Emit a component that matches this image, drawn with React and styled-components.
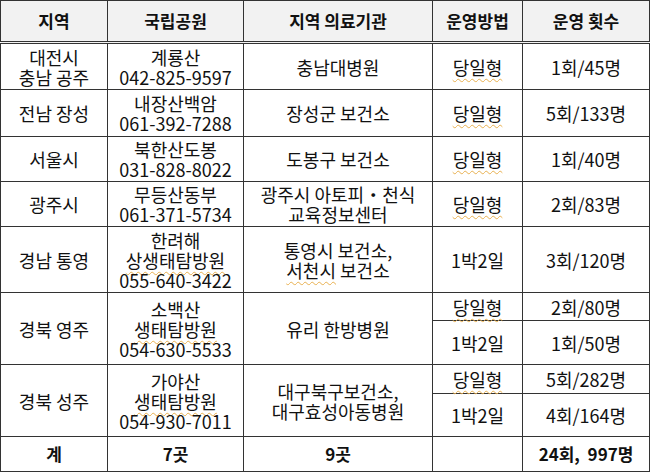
import React from 'react';
import styled, { createGlobalStyle } from 'styled-components';

const GlobalStyle = createGlobalStyle`
  body {
    margin: 0;
    background: #fff;
    font-family: "Noto Sans CJK KR", "Noto Sans", sans-serif;
  }
`;

const Table = styled.table`
  width: 649px;
  border-collapse: collapse;
  table-layout: fixed;
  color: #111;
  font-size: 18px;
  line-height: 20px;
  border-left: 1px dashed #7b6a60;
  border-top: 1px solid #333;
`;

const Th = styled.th`
  height: 40px;
  padding: 0;
  background: #f2f2f2;
  font-size: 17px;
  font-weight: 700;
  text-align: center;
  border: 1px solid #333;
  border-bottom: 3px double #333;
`;

const Td = styled.td`
  height: ${p => p.$h}px;
  padding: 0;
  text-align: center;
  vertical-align: middle;
  border: 1px solid #333;
  font-weight: ${p => (p.$bold ? 700 : 400)};
  font-size: ${p => (p.$bold ? '17px' : '18px')};
  white-space: pre;
`;

const Squiggle = styled.span`
  text-decoration: underline wavy #e8b050;
  text-decoration-thickness: 1px;
  text-underline-offset: 3px;
`;

const Lines = ({ children }) => children.map((line, i) => (
  <React.Fragment key={i}>
    {i > 0 && <br />}
    {line}
  </React.Fragment>
));

const Day = () => <Squiggle>당일형</Squiggle>;

const App = () => (
  <>
    <GlobalStyle />
    <Table>
      <colgroup>
        <col style={{ width: 107 }} />
        <col style={{ width: 136 }} />
        <col style={{ width: 189 }} />
        <col style={{ width: 90 }} />
        <col style={{ width: 127 }} />
      </colgroup>
      <thead>
        <tr>
          <Th>지역</Th>
          <Th>국립공원</Th>
          <Th>지역 의료기관</Th>
          <Th>운영방법</Th>
          <Th>운영 횟수</Th>
        </tr>
      </thead>
      <tbody>
        <tr>
          <Td $h={45}><Lines>{['대전시', '충남 공주']}</Lines></Td>
          <Td><Lines>{['계룡산', '042-825-9597']}</Lines></Td>
          <Td>충남대병원</Td>
          <Td><Day /></Td>
          <Td>1회/45명</Td>
        </tr>
        <tr>
          <Td $h={46}>전남 장성</Td>
          <Td><Lines>{['내장산백암', '061-392-7288']}</Lines></Td>
          <Td>장성군 보건소</Td>
          <Td><Day /></Td>
          <Td>5회/133명</Td>
        </tr>
        <tr>
          <Td $h={44}>서울시</Td>
          <Td><Lines>{['북한산도봉', '031-828-8022']}</Lines></Td>
          <Td>도봉구 보건소</Td>
          <Td><Day /></Td>
          <Td>1회/40명</Td>
        </tr>
        <tr>
          <Td $h={44}>광주시</Td>
          <Td><Lines>{['무등산동부', '061-371-5734']}</Lines></Td>
          <Td><Lines>{['광주시 아토피・천식', '교육정보센터']}</Lines></Td>
          <Td><Day /></Td>
          <Td>2회/83명</Td>
        </tr>
        <tr>
          <Td $h={65}>경남 통영</Td>
          <Td><Lines>{['한려해', <Squiggle>상생태탐방원</Squiggle>, '055-640-3422']}</Lines></Td>
          <Td><Lines>{['통영시 보건소,', <><Squiggle>서천시</Squiggle> 보건소</>]}</Lines></Td>
          <Td>1박2일</Td>
          <Td>3회/120명</Td>
        </tr>
        <tr>
          <Td rowSpan={2}>경북 영주</Td>
          <Td rowSpan={2}><Lines>{['소백산', <Squiggle>생태탐방원</Squiggle>, '054-630-5533']}</Lines></Td>
          <Td rowSpan={2}>유리 한방병원</Td>
          <Td $h={27}><Day /></Td>
          <Td>2회/80명</Td>
        </tr>
        <tr>
          <Td $h={43}>1박2일</Td>
          <Td>1회/50명</Td>
        </tr>
        <tr>
          <Td rowSpan={2}>경북 성주</Td>
          <Td rowSpan={2}><Lines>{['가야산', <Squiggle>생태탐방원</Squiggle>, '054-930-7011']}</Lines></Td>
          <Td rowSpan={2}><Lines>{['대구북구보건소,', '대구효성아동병원']}</Lines></Td>
          <Td $h={28}><Day /></Td>
          <Td>5회/282명</Td>
        </tr>
        <tr>
          <Td $h={42}>1박2일</Td>
          <Td>4회/164명</Td>
        </tr>
        <tr>
          <Td $h={34} $bold>계</Td>
          <Td $bold>7곳</Td>
          <Td $bold>9곳</Td>
          <Td $bold></Td>
          <Td $bold>24회,  997명</Td>
        </tr>
      </tbody>
    </Table>
  </>
);

export default App;
